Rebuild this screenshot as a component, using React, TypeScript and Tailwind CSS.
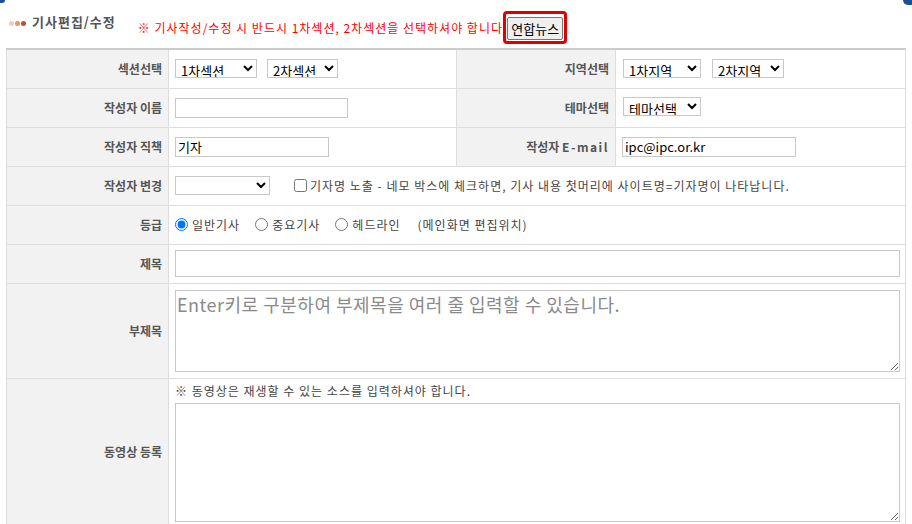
import { useState } from "react";

const font = { fontFamily: '"Noto Sans CJK KR", "Noto Sans", sans-serif' };

const labelCls =
  "bg-[#f2f2f2] border border-[#dddddd] pr-[6px] text-right align-middle text-[12px] font-bold text-[#555555] whitespace-nowrap";
const valueCls = "border border-[#dddddd] pl-[6px] align-middle text-[12px] text-[#444444]";
const selectCls =
  "h-[19px] border border-[#c8c8c8] bg-white text-[13px] text-black leading-none pl-[1px]";
const inputCls = "h-[20px] border border-[#c8c8c8] bg-white px-[2px] text-[13px] text-black outline-none";

const App = () => {
  const [grade, setGrade] = useState("normal");
  const [showName, setShowName] = useState(false);

  return (
    <div className="relative h-[524px] w-[912px] overflow-hidden bg-white" style={font}>
      {/* corner bits of the outer frame */}
      <div className="absolute left-0 top-0 h-[3px] w-[5px] rounded-br-[4px] bg-[#1d4f91]" />
      <div className="absolute right-0 top-0 h-[5px] w-[9px] rounded-bl-[6px] bg-[#1d4f91]" />

      {/* header */}
      <div className="flex h-[48px] items-start pl-[9px]">
        <div className="flex items-center gap-[1px] pt-[21px]">
          <span className="h-[5px] w-[5px] rounded-full bg-[#f5cdb6]" />
          <span className="h-[5px] w-[5px] rounded-full bg-[#e3956b]" />
          <span className="h-[5px] w-[5px] rounded-full bg-[#b8532d]" />
        </div>
        <h1 className="pl-[6px] pt-[12px] text-[13px] font-bold tracking-[1px] text-[#555555]">기사편집/수정</h1>
        <p className="pl-[22px] pt-[19px] text-[12px] tracking-[1px] text-[#ff0000]">
          ※ 기사작성/수정 시 반드시 1차섹션, 2차섹션을 선택하셔야 합니다.
        </p>
        <div className="ml-[-4px] mt-[11px] rounded-[4px] border-[3px] border-[#e00000] p-[1px]">
          <button
            type="button"
            className="h-[23px] rounded-[2px] border border-[#767676] bg-[#efefef] px-[3px] text-[13px] leading-none text-black"
          >
            연합뉴스
          </button>
        </div>
      </div>

      {/* form table */}
      <table className="ml-[6px] w-[900px] table-fixed border-collapse border-t-2 border-t-[#cccccc]">
        <colgroup>
          <col className="w-[162px]" />
          <col className="w-[288px]" />
          <col className="w-[159px]" />
          <col />
        </colgroup>
        <tbody>
          <tr className="h-[39px]">
            <th className={labelCls}>섹션선택</th>
            <td className={valueCls}>
              <div className="flex items-center gap-[10px]">
                <select className={`${selectCls} w-[82px]`} defaultValue="1">
                  <option value="1">1차섹션</option>
                </select>
                <select className={`${selectCls} w-[71px]`} defaultValue="2">
                  <option value="2">2차섹션</option>
                </select>
              </div>
            </td>
            <th className={labelCls}>지역선택</th>
            <td className={valueCls}>
              <div className="flex items-center gap-[11px] pl-[1px]">
                <select className={`${selectCls} w-[78px]`} defaultValue="1">
                  <option value="1">1차지역</option>
                </select>
                <select className={`${selectCls} w-[72px]`} defaultValue="2">
                  <option value="2">2차지역</option>
                </select>
              </div>
            </td>
          </tr>
          <tr className="h-[39px]">
            <th className={labelCls}>작성자 이름</th>
            <td className={valueCls}>
              <input className={`${inputCls} w-[173px]`} defaultValue="" />
            </td>
            <th className={labelCls}>테마선택</th>
            <td className={valueCls}>
              <select className={`${selectCls} ml-[1px] w-[78px]`} defaultValue="t">
                <option value="t">테마선택</option>
              </select>
            </td>
          </tr>
          <tr className="h-[39px]">
            <th className={labelCls}>작성자 직책</th>
            <td className={valueCls}>
              <input className={`${inputCls} w-[154px]`} defaultValue="기자" />
            </td>
            <th className={labelCls}>
              작성자 <span className="tracking-[1.5px]">E-mail</span>
            </th>
            <td className={valueCls}>
              <input className={`${inputCls} w-[174px]`} defaultValue="ipc@ipc.or.kr" />
            </td>
          </tr>
          <tr className="h-[39px]">
            <th className={labelCls}>작성자 변경</th>
            <td className={valueCls} colSpan={3}>
              <div className="flex items-center">
                <select className={`${selectCls} w-[95px]`} defaultValue="">
                  <option value=""></option>
                </select>
                <label className="ml-[24px] flex items-center gap-[3px]">
                  <input
                    type="checkbox"
                    className="m-0 h-[13px] w-[13px]"
                    checked={showName}
                    onChange={() => setShowName((prev) => !prev)}
                  />
                  <span className="tracking-[1px]">
                    기자명 노출 - 네모 박스에 체크하면, 기사 내용 첫머리에 사이트명=기자명이 나타납니다.
                  </span>
                </label>
              </div>
            </td>
          </tr>
          <tr className="h-[39px]">
            <th className={labelCls}>등급</th>
            <td className={valueCls} colSpan={3}>
              <div className="flex items-center">
                {[
                  { id: "normal", text: "일반기사" },
                  { id: "important", text: "중요기사" },
                  { id: "headline", text: "헤드라인" },
                ].map((item) => (
                  <label key={item.id} className="mr-[15px] flex items-center gap-[4px]">
                    <input
                      type="radio"
                      name="grade"
                      className="m-0 h-[13px] w-[13px]"
                      checked={grade === item.id}
                      onChange={() => setGrade(item.id)}
                    />
                    <span className="tracking-[1px]">{item.text}</span>
                  </label>
                ))}
                <span className="ml-[2px] tracking-[1px]">(메인화면 편집위치)</span>
              </div>
            </td>
          </tr>
          <tr className="h-[39px]">
            <th className={labelCls}>제목</th>
            <td className={`${valueCls} pr-[5px]`} colSpan={3}>
              <input className={`${inputCls} h-[27px] w-full`} defaultValue="" />
            </td>
          </tr>
          <tr className="h-[95px]">
            <th className={labelCls}>부제목</th>
            <td className={`${valueCls} pr-[5px]`} colSpan={3}>
              <textarea
                className="block h-[82px] w-full border border-[#c8c8c8] px-[1px] py-0 text-[18px] leading-[26px] tracking-[0.5px] text-black outline-none placeholder:text-[#8a8a8a]"
                placeholder="Enter키로 구분하여 부제목을 여러 줄 입력할 수 있습니다."
              />
            </td>
          </tr>
          <tr className="h-[148px]">
            <th className={labelCls}>동영상 등록</th>
            <td className={`${valueCls} pr-[5px] pt-[3px] align-top`} colSpan={3}>
              <p className="h-[21px] leading-[18px] tracking-[1px]">※ 동영상은 재생할 수 있는 소스를 입력하셔야 합니다.</p>
              <textarea className="block h-[119px] w-full border border-[#c8c8c8] px-[2px] text-[13px] outline-none" />
            </td>
          </tr>
        </tbody>
      </table>
    </div>
  );
};

export default App;
